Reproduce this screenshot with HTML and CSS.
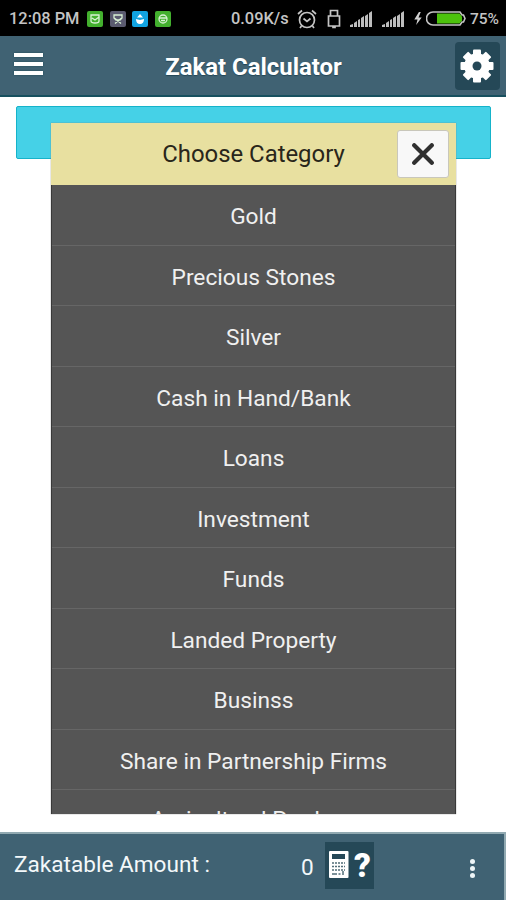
FILE: index.html
```html
<!DOCTYPE html>
<html lang="en">
<head>
    <meta charset="UTF-8">
    <meta name="viewport" content="width=device-width, initial-scale=1.0">
    <title>Zakat Calculator</title>
    <link rel="stylesheet" href="styles.css">
</head>
<body>
    <div class="status-bar">
        <span class="clock">12:08 PM</span>
        <div class="notifications">
            <svg class="notice green" viewBox="0 0 16 16"><path d="M4 4h8v6q0 2-4 2t-4-2zM5 7l3 2 4-3"/></svg>
            <svg class="notice slate" viewBox="0 0 16 16"><path d="M4 4h8v3l-2 2H6L4 7zM5 12.500l6-5M11 12.500l-6-5"/></svg>
            <svg class="notice blue" viewBox="0 0 16 16"><path class="solid" d="M8 3l3 3.500H5zM4 8l4 1 4-1q0 5-4 5T4 8z"/></svg>
            <svg class="notice green" viewBox="0 0 16 16"><circle cx="8" cy="8" r="4"/><path d="M4 7h8M6 9.500h4"/></svg>
        </div>
        <span class="speed">0.09K/s</span>
        <svg class="alarm" viewBox="0 0 20 20"><circle cx="10" cy="11" r="7.500"/><path d="M1 5l4-3.500M19 5l-4-3.500M6.500 9.500l3.500 3 3.500-3M4.500 17L3 19M15.500 17l1.500 2"/></svg>
        <svg class="usb" viewBox="0 0 14 20"><path d="M3.500 7V1.500h7V7M1.500 7h11v10h-11zM6 17v1.500h2V17"/></svg>
        <svg class="signal" viewBox="0 0 24 16"><path d="M1 16v-2l3-1v3zM5 16v-4l3-2v6zM9 16V9l2-1v8zM12 16V7l3-2v11zM16 16V5l3-2v13zM20 16V2l3-2v16z"/></svg>
        <svg class="signal" viewBox="0 0 24 16"><path d="M1 16v-2l3-1v3zM5 16v-4l3-2v6zM9 16V9l2-1v8zM12 16V7l3-2v11zM16 16V5l3-2v13zM20 16V2l3-2v16z"/></svg>
        <svg class="bolt" viewBox="0 0 8 14"><path d="M5 0L0 8h3.500L2 14l6-8H4.500L7 0z"/></svg>
        <svg class="battery" viewBox="0 0 40 15"><path class="shell" d="M7 1h27l2 3h1.500l1.500 3.500-1.500 3.500H36l-2 3H7a6.500 6.500 0 0 1 0-13z"/><path class="charge" d="M11 2.500h22.500l2.500 3v4l-2.500 3H11z"/></svg>
        <span class="percent">75%</span>
    </div>

    <header class="header">
        <button class="menu-button" aria-label="Menu"><i></i><i></i><i></i></button>
        <h1>Zakat Calculator</h1>
        <button class="settings-button" aria-label="Settings">
            <svg viewBox="-17 -17 34 34">
                <rect x="-4" y="-16.500" width="8" height="33" rx="1"/>
                <rect x="-4" y="-16.500" width="8" height="33" rx="1" transform="rotate(45)"/>
                <rect x="-4" y="-16.500" width="8" height="33" rx="1" transform="rotate(90)"/>
                <rect x="-4" y="-16.500" width="8" height="33" rx="1" transform="rotate(135)"/>
                <circle r="12.800"/>
                <circle class="hole" r="4.500"/>
            </svg>
        </button>
    </header>

    <main class="content">
        <div class="category-field"></div>
        <div class="popup">
            <div class="popup-header">
                <h2>Choose Category</h2>
                <button class="close-button" aria-label="Close">
                    <svg viewBox="0 0 20 20"><path d="M2 2l16 16M18 2L2 18"/></svg>
                </button>
            </div>
            <ul class="category-list">
                <li>Gold</li>
                <li>Precious Stones</li>
                <li>Silver</li>
                <li>Cash in Hand/Bank</li>
                <li>Loans</li>
                <li>Investment</li>
                <li>Funds</li>
                <li>Landed Property</li>
                <li>Businss</li>
                <li>Share in Partnership Firms</li>
                <li>Agricultural Produce</li>
            </ul>
        </div>
    </main>

    <footer class="footer">
        <span class="label">Zakatable Amount :</span>
        <span class="amount">0</span>
        <button class="calc-button" aria-label="Calculation help">
            <svg viewBox="0 0 20 28">
                <rect width="19.500" height="27" rx="1"/>
                <path class="screen" d="M3 3h13v5H3z"/>
                <path class="keys" d="M3 12h13M3 15.500h13M3 19h13"/>
                <path class="keys wide" d="M3 23h5M9.500 23h2M14 20v4"/>
            </svg>
            <span>?</span>
        </button>
        <button class="more-button" aria-label="More"><i></i><i></i><i></i></button>
    </footer>
</body>
</html>
```

FILE: styles.css
```css
* {
    box-sizing: border-box;
}
body {
    margin: 0;
    height: 900px;
    display: flex;
    flex-direction: column;
    overflow: hidden;
    font-family: Roboto, sans-serif;
    background-color: #fff;
}
h1, h2, ul {
    margin: 0;
    padding: 0;
    font-weight: normal;
}
button {
    padding: 0;
    border: none;
    background: none;
    font-family: inherit;
}
svg {
    display: block;
    flex: none;
}

/* status bar */
.status-bar {
    height: 36px;
    flex: none;
    display: flex;
    align-items: center;
    padding: 1px 0 0 9px;
    background-color: #000;
    color: #c4c4c4;
    font-size: 16.400px;
    font-weight: 500;
    white-space: nowrap;
}
.clock {
    width: 78px;
}
.notifications {
    display: flex;
    gap: 6.500px;
    width: 144px;
}
.notice {
    width: 16px;
    height: 16px;
    border-radius: 2px;
    fill: none;
    stroke: #d9f2d5;
    stroke-width: 1.300;
}
.notice .solid {
    fill: #fff;
    stroke: none;
}
.green {
    background-color: #43b02e;
}
.slate {
    background-color: #5b5b70;
}
.blue {
    background-color: #11a4e2;
}
.speed {
    width: 66px;
}
.alarm, .usb {
    fill: none;
    stroke: #c4c4c4;
    stroke-width: 1.700;
}
.alarm {
    width: 20px;
    height: 20px;
}
.usb {
    width: 14px;
    height: 20px;
    margin-left: 10px;
}
.signal {
    width: 24px;
    height: 16px;
    margin-left: 8px;
    fill: #bdbdbd;
}
.bolt {
    width: 8px;
    height: 13px;
    margin-left: 9px;
    fill: #d0d0d0;
}
.battery {
    width: 40px;
    height: 15px;
    margin-left: 4px;
}
.shell {
    fill: none;
    stroke: #c4c4c4;
    stroke-width: 1.600;
}
.charge {
    fill: #4cc20c;
}
.percent {
    margin-left: 4px;
    font-size: 15.500px;
}

/* title bar */
.header {
    height: 61px;
    flex: none;
    display: flex;
    align-items: center;
    justify-content: space-between;
    padding: 0 6px 0 14px;
    background-color: #406273;
    border-bottom: 2px solid #17505f;
}
.header h1 {
    padding: 3px 7px 0 0;
    color: #fff;
    font-size: 23.900px;
    font-weight: 700;
    text-shadow: 0 1px 1px #234656;
}
.menu-button {
    width: 45px;
    display: grid;
    gap: 5px;
    margin-bottom: 4px;
}
.menu-button i {
    width: 29px;
    height: 4px;
    background-color: #fff;
    box-shadow: 0 0 2px #174452;
}
.settings-button {
    width: 45px;
    height: 48px;
    display: grid;
    place-items: center;
    margin-top: 1px;
    border-radius: 4px;
    background-color: #254857;
}
.settings-button svg {
    width: 34px;
    height: 34px;
    fill: #fff;
}
.settings-button .hole {
    fill: #254857;
}

/* popup over the category field */
.content {
    position: relative;
    flex: 1;
    padding: 9px 15px 0 16px;
}
.category-field {
    height: 53px;
    border: 1px solid #15b3ca;
    border-radius: 2px;
    background-color: #45d1e7;
}
.popup {
    position: absolute;
    top: 26px;
    left: 51px;
    width: 405px;
    height: 691px;
    display: flex;
    flex-direction: column;
    overflow: hidden;
    box-shadow: 0 0 1px #777;
}
.popup-header {
    height: 62px;
    flex: none;
    display: grid;
    grid-template-columns: 52px 1fr 52px;
    align-items: center;
    padding: 0 7px;
    background-color: #e8e0a0;
}
.popup-header h2 {
    grid-column: 2;
    color: #29261a;
    font-size: 23.900px;
    text-align: center;
}
.close-button {
    width: 52px;
    height: 48px;
    display: grid;
    place-items: center;
    margin-bottom: 1px;
    border: 1px solid #c9c7bb;
    border-radius: 3px;
    background-color: #f8f8f8;
}
.close-button svg {
    width: 22px;
    height: 22px;
    fill: none;
    stroke: #303030;
    stroke-width: 3.800;
    stroke-linecap: round;
}
.category-list {
    list-style: none;
    border: 1px solid #393939;
    border-width: 0 1px;
    background-color: #555;
    flex: 1;
    overflow: hidden;
}
.category-list li {
    height: 60.500px;
    padding-top: 2px;
    border-bottom: 1px solid #666;
    color: #f0f0f0;
    font-size: 22.700px;
    line-height: 60px;
    text-align: center;
}
.category-list li:last-child {
    padding-top: 0;
}

/* bottom bar */
.footer {
    height: 68px;
    flex: none;
    display: flex;
    align-items: center;
    padding-left: 14px;
    border-top: 2px solid #91a9b1;
    border-right: 2px solid #91a9b1;
    background-color: #406273;
    color: #f3f8fa;
    font-size: 22.600px;
}
.label {
    width: 287px;
    padding-bottom: 5px;
}
.amount {
    width: 24px;
    padding-top: 1px;
}
.calc-button {
    width: 49px;
    height: 47px;
    display: flex;
    align-items: center;
    gap: 5px;
    margin-bottom: 4px;
    padding-left: 4px;
    background-color: #254857;
    color: #fff;
}
.calc-button svg {
    width: 20px;
    height: 28px;
    fill: #fff;
}
.calc-button .screen {
    fill: #254857;
}
.keys {
    fill: none;
    stroke: #526d78;
    stroke-width: 1.500;
    stroke-dasharray: 2 1;
}
.wide {
    stroke-dasharray: none;
}
.calc-button span {
    font-size: 33px;
    font-weight: 900;
    line-height: 1;
}
.more-button {
    display: grid;
    gap: 2px;
    margin: 2px 0 0 96px;
}
.more-button i {
    width: 5px;
    height: 5px;
    border-radius: 50%;
    background-color: #eef5f7;
}
```
